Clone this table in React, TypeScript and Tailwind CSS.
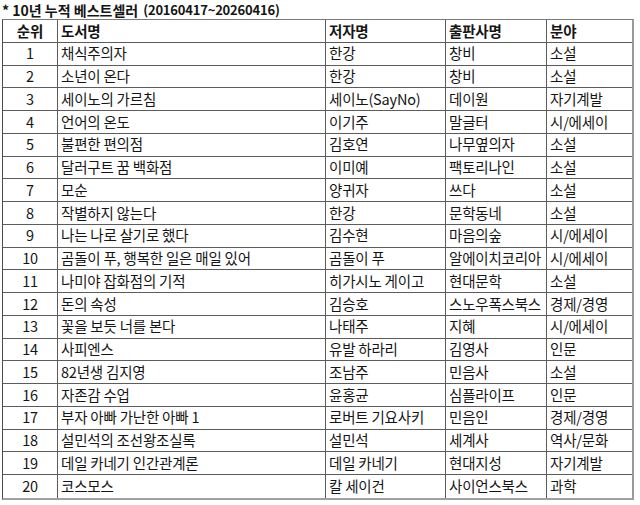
import React from "react";

const rows: [string, string, string, string, string][] = [
  ["1", "채식주의자", "한강", "창비", "소설"],
  ["2", "소년이 온다", "한강", "창비", "소설"],
  ["3", "세이노의 가르침", "세이노(SayNo)", "데이원", "자기계발"],
  ["4", "언어의 온도", "이기주", "말글터", "시/에세이"],
  ["5", "불편한 편의점", "김호연", "나무옆의자", "소설"],
  ["6", "달러구트 꿈 백화점", "이미예", "팩토리나인", "소설"],
  ["7", "모순", "양귀자", "쓰다", "소설"],
  ["8", "작별하지 않는다", "한강", "문학동네", "소설"],
  ["9", "나는 나로 살기로 했다", "김수현", "마음의숲", "시/에세이"],
  ["10", "곰돌이 푸, 행복한 일은 매일 있어", "곰돌이 푸", "알에이치코리아", "시/에세이"],
  ["11", "나미야 잡화점의 기적", "히가시노 게이고", "현대문학", "소설"],
  ["12", "돈의 속성", "김승호", "스노우폭스북스", "경제/경영"],
  ["13", "꽃을 보듯 너를 본다", "나태주", "지혜", "시/에세이"],
  ["14", "사피엔스", "유발 하라리", "김영사", "인문"],
  ["15", "82년생 김지영", "조남주", "민음사", "소설"],
  ["16", "자존감 수업", "윤홍균", "심플라이프", "인문"],
  ["17", "부자 아빠 가난한 아빠 1", "로버트 기요사키", "민음인", "경제/경영"],
  ["18", "설민석의 조선왕조실록", "설민석", "세계사", "역사/문화"],
  ["19", "데일 카네기 인간관계론", "데일 카네기", "현대지성", "자기계발"],
  ["20", "코스모스", "칼 세이건", "사이언스북스", "과학"],
];

const font = { fontFamily: '"Noto Sans CJK KR", "Noto Sans", sans-serif' };

function Row({ cells, header }: { cells: string[]; header?: boolean }) {
  return (
    <div
      className={`grid grid-cols-[55px_268px_120px_101px_84px] h-[22.76px] border-b border-[#5c5c5c] last:border-b-0 ${
        header ? "font-bold text-[14.5px]" : "text-[14.5px]"
      }`}
    >
      {cells.map((c, i) => (
        <div
          key={i}
          className={`flex items-center border-r border-[#5c5c5c] last:border-r-0 whitespace-nowrap overflow-hidden leading-none tracking-[-0.2px] ${
            i === 0 ? "justify-center" : "pl-[3px]"
          }`}
        >
          {c}
        </div>
      ))}
    </div>
  );
}

export default function App() {
  return (
    <div className="w-[640px] h-[505px] bg-white text-[#151515]" style={font}>
      <div className="h-[19px] pl-[2px] font-bold leading-[18px] flex items-center whitespace-nowrap">
        <span className="text-[14px]">* 10년 누적 베스트셀러</span>
        <span className="text-[13px] ml-[5px] tracking-[-0.2px]">(20160417~20260416)</span>
      </div>
      <div className="ml-[2px] w-[632px] border-l border-l-[#4a4a4a] border-t border-t-[#7a7a7a] border-r-2 border-r-[#9a9a9a] border-b-2 border-b-[#a0a0a0]">
        <Row header cells={["순위", "도서명", "저자명", "출판사명", "분야"]} />
        {rows.map((r) => (
          <Row key={r[0]} cells={r} />
        ))}
      </div>
    </div>
  );
}
